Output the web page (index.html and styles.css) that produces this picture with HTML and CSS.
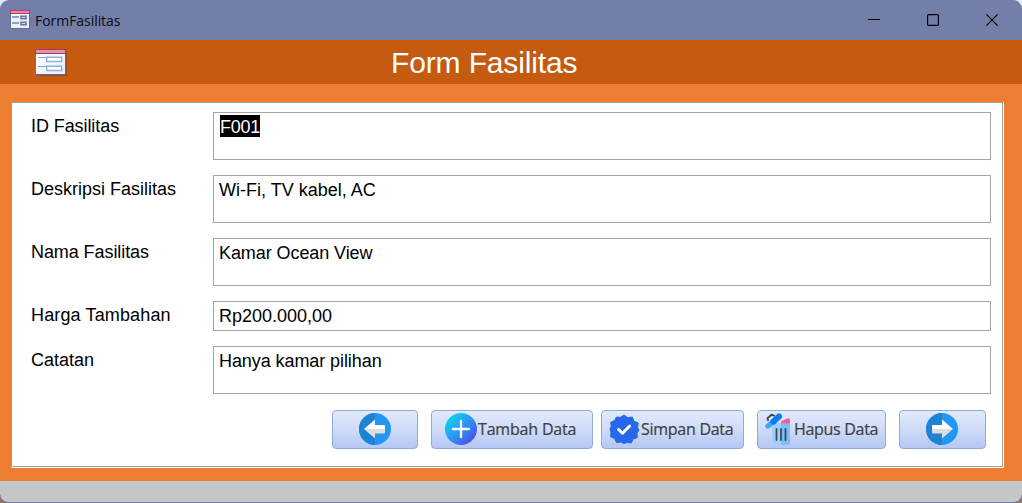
FILE: index.html
```html
<!DOCTYPE html>
<html lang="id">
<head>
<meta charset="utf-8">
<title>FormFasilitas</title>
<link rel="stylesheet" href="styles.css">
</head>
<body>
<div class="window">
  <header class="titlebar">
    <svg class="app-icon" width="20" height="19" viewBox="0 0 20 19">
      <rect width="20" height="19" fill="#5f6b99"/>
      <rect x="1" y="4" width="18" height="14" fill="#eef0f9"/>
      <rect width="20" height="4" fill="#b83b68"/>
      <rect x="1" y="1" width="18" height="2" fill="#dc8ba7"/>
      <path d="M2 7h7M2 13h7" stroke="#7185ad" stroke-width="1.5"/>
      <path d="M11 6.2h5v2.6h-5zM11 12.2h5v2.6h-5z" fill="#d6dff0" stroke="#657598" stroke-width="1.6"/>
    </svg>
    <span class="window-title">FormFasilitas</span>
    <div class="window-controls">
      <svg width="12" height="12" viewBox="0 0 12 12"><path d="M0 5.5h12" stroke="#000"/></svg>
      <svg width="12" height="12" viewBox="0 0 12 12"><rect x=".6" y=".6" width="10.8" height="10.8" rx="1" fill="none" stroke="#000" stroke-width="1.2"/></svg>
      <svg width="12" height="12" viewBox="0 0 12 12"><path d="M.3.3l11.4 11.4M11.7.3L.3 11.7" stroke="#000" stroke-width="1.2"/></svg>
    </div>
  </header>
  <div class="form-header">
    <svg class="form-icon" width="33" height="28" viewBox="0 0 33 28">
      <defs><linearGradient id="paper" x2="1" y2="1"><stop offset="0" stop-color="#fff"/><stop offset="1" stop-color="#e6edfa"/></linearGradient></defs>
      <path d="M2 2h30v25H2z" fill="#6b3620" opacity=".45"/>
      <rect x="1" y="1" width="30" height="25" fill="#5f6b9c"/>
      <rect x="1" y="5" width="29" height="20" fill="url(#paper)"/>
      <rect y="0" width="31" height="5" fill="#b63560"/>
      <rect x="1" y="1" width="29" height="3" fill="#db94b1"/>
      <path d="M3 8.500h8M3 17.500h8" stroke="#87a6d6"/>
      <path d="M11.700 8.200h15v4.300h-15zM11.700 17.200h15v4.300h-15z" fill="#fff" stroke="#8fb0e0" stroke-width="1.400"/>
    </svg>
    <h1 class="form-title">Form Fasilitas</h1>
  </div>
  <main class="form-body">
    <form class="panel">
      <div class="fields">
        <span class="label label-tight">ID Fasilitas</span><div class="field"><span class="selected">F001</span></div>
        <span class="label">Deskripsi Fasilitas</span><div class="field">Wi-Fi, TV kabel, AC</div>
        <span class="label label-tight">Nama Fasilitas</span><div class="field field-tight">Kamar Ocean View</div>
        <span class="label label-wide">Harga Tambahan</span><div class="field field-short">Rp200.000,00</div>
        <span class="label">Catatan</span><div class="field field-tight">Hanya kamar pilihan</div>
      </div>
      <div class="actions">
        <button type="button" class="btn btn-prev" aria-label="Sebelumnya">
          <svg width="32" height="32" viewBox="0 0 32 32"><circle cx="16" cy="16" r="16" fill="#2196f3"/><path d="M16 0a16 16 0 0 0 0 32z" fill="#1c83d5"/><path d="M5 16L16 6.500V12h9q1 0 1 1v3z" fill="#fff"/><path d="M5 16h21v3.500q0 1-1 1h-9v5z" fill="#dedede"/></svg>
        </button>
        <button type="button" class="btn btn-add">
          <svg width="32" height="32" viewBox="0 0 32 32"><defs><linearGradient id="add" x1=".1" y1=".1" x2=".9" y2=".9"><stop offset="0" stop-color="#0ed5f4"/><stop offset=".5" stop-color="#2b97f2"/><stop offset="1" stop-color="#5148ef"/></linearGradient></defs><circle cx="16" cy="16" r="16" fill="url(#add)"/><path d="M16 8v16M8 16h16" stroke="#fff" stroke-width="2.300" stroke-linecap="round"/></svg>
          <span>Tambah Data</span>
        </button>
        <button type="button" class="btn btn-save">
          <svg width="32" height="32" viewBox="0 0 32 32"><path d="M16 2l3.700 2.700 4.600-.7 1.700 4.300 4.300 1.700-.7 4.600 1.400 2.400-2 3.300.3 4.200-4.300 1.700-1.700 3.800-4.400-.5L16 30.500l-3.300-1.500-4.200.5-1.900-3.900-4-1.900.4-4.200L2 16l1.200-2.600-.6-4 4-1.900L8.500 4l4 .3z" fill="#2667ed" stroke="#2667ed" stroke-linejoin="round"/><path d="M10.500 16.500l4 3.700 7.200-7.200" fill="none" stroke="#fff" stroke-width="3" stroke-linecap="round" stroke-linejoin="round"/></svg>
          <span>Simpan Data</span>
        </button>
        <button type="button" class="btn btn-delete">
          <svg width="32" height="32" viewBox="0 0 32 32"><path d="M7 10h18v19q0 3-3 3H10q-3 0-3-3z" fill="#9cd0ff"/><path d="M16 10h9v19q0 3-3 3h-6z" fill="#7cbcff"/><path d="M16 10.300q-1-2 1-2.600l6-2.400q2-.4 2 2v3z" fill="#ff5c93"/><path d="M3 7l-.5-1.800L6.500 1.800l2.700.8" fill="none" stroke="#414952" stroke-width="2" stroke-linecap="round" stroke-linejoin="round"/><path d="M3 13L8.500 8.500" stroke="#3da9ff" stroke-width="5.400" stroke-linecap="round"/><path d="M8.500 8.500L14 3.500" stroke="#087cf7" stroke-width="6" stroke-linecap="round"/><path d="M11.500 16v11M16 16v11M20.500 16v11" stroke="#414952" stroke-width="1.800" stroke-linecap="round"/></svg>
          <span>Hapus Data</span>
        </button>
        <button type="button" class="btn btn-next" aria-label="Berikutnya">
          <svg width="32" height="32" viewBox="0 0 32 32"><circle cx="16" cy="16" r="16" fill="#2196f3"/><path d="M16 0a16 16 0 0 0 0 32z" fill="#1c83d5"/><path d="M27 16L16 6.500V12H7q-1 0-1 1v3z" fill="#fff"/><path d="M27 16H6v3.500q0 1 1 1h9v5z" fill="#dedede"/></svg>
        </button>
      </div>
    </form>
  </main>
  <footer class="statusbar"></footer>
</div>
</body>
</html>
```

FILE: styles.css
```css
* { box-sizing: border-box; }
html { background: linear-gradient(#dfe8f5, #8d7770); }
body { margin: 0; font-family: "Liberation Sans", Arial, sans-serif; }
.window {
  display: flex;
  flex-direction: column;
  height: 503px;
  border-radius: 9px;
  overflow: hidden;
}
.titlebar {
  display: flex;
  align-items: center;
  height: 40px;
  padding: 0 24px 0 10px;
  background: #737fa8;
}
.app-icon { margin-top: -2px; }
.window-title {
  margin-left: 5px;
  font: 14px "Open Sans", sans-serif;
  letter-spacing: -0.05px;
  color: #0b0c12;
}
.window-controls {
  display: flex;
  gap: 47px;
  margin-left: auto;
}
.window-controls svg { display: block; }
.form-header {
  display: flex;
  align-items: center;
  height: 44px;
  padding-left: 35px;
  background: #c55a11;
}
.form-icon { margin-top: 2px; }
.form-title {
  margin: 2px 0 0 323px;
  font-size: 30px;
  font-weight: 400;
  line-height: 44px;
  letter-spacing: -0.14px;
  color: #fff;
}
.form-body {
  flex: 1;
  padding: 18px 18px 0 11px;
  background: #ed7d31;
}
.panel {
  height: 366px;
  padding: 9px 11px 0 19px;
  background: #fff;
  border: 1px solid #a0a0a0;
  border-right-color: #fff;
  border-bottom-color: #fff;
  box-shadow: inset -1px -1px #a0a0a0;
}
.fields {
  display: grid;
  grid-template-columns: 182px 778px;
  row-gap: 15px;
  font-size: 18px;
  line-height: 20px;
  color: #000;
}
.label { padding-top: 4px; }
.label-tight { letter-spacing: -0.08px; }
.label-wide { letter-spacing: 0.14px; }
.field {
  height: 48px;
  padding: 4px 5px;
  border: 1px solid #a6a6a6;
}
.field-short { height: 30px; }
.field-tight { letter-spacing: -0.08px; }
.selected {
  display: inline-block;
  width: 40px;
  height: 22px;
  margin: -2px 0 0 1px;
  padding-top: 2px;
  background: #000;
  color: #fff;
  letter-spacing: -0.25px;
}
.actions {
  display: flex;
  margin: 16px 0 0 301px;
}
.btn {
  display: flex;
  align-items: center;
  height: 39px;
  padding: 0;
  border: 1px solid #8faadc;
  border-radius: 4px;
  background: linear-gradient(#e1e9fb, #cfdbf8 50%, #b4c7f3);
  font: 16px "Open Sans", sans-serif;
  color: #404040;
  white-space: nowrap;
}
.btn svg { flex: none; margin-top: -1px; }
.btn span { margin-top: -1px; -webkit-text-stroke: 0.2px #404040; }
.btn-prev { width: 86px; margin-right: 13px; padding-left: 26px; }
.btn-add { width: 162px; margin-right: 8px; padding-left: 13px; letter-spacing: -0.18px; }
.btn-add span { margin-left: 1px; }
.btn-save { width: 143px; margin-right: 13px; padding-left: 6px; letter-spacing: -0.27px; }
.btn-save span { margin-left: 1px; }
.btn-delete { width: 129px; margin-right: 13px; padding-left: 7px; letter-spacing: -0.3px; }
.btn-delete span { margin-left: -3px; }
.btn-next { width: 87px; padding-left: 26px; }
.statusbar {
  height: 22px;
  background: #c5c6ca;
  border-bottom: 1px solid #737fa8;
  border-radius: 0 0 9px 9px;
}
```
